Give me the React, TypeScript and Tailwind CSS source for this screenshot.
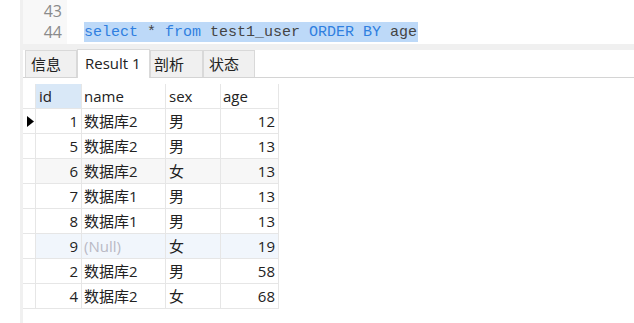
import React from "react";

type Row = { id: number; name: string | null; sex: string; age: number; bg?: string };

const rows: Row[] = [
  { id: 1, name: "数据库2", sex: "男", age: 12 },
  { id: 5, name: "数据库2", sex: "男", age: 13 },
  { id: 6, name: "数据库2", sex: "女", age: 13, bg: "bg-[#f7f7f7]" },
  { id: 7, name: "数据库1", sex: "男", age: 13 },
  { id: 8, name: "数据库1", sex: "男", age: 13 },
  { id: 9, name: null, sex: "女", age: 19, bg: "bg-[#f1f6fc]" },
  { id: 2, name: "数据库2", sex: "男", age: 58 },
  { id: 4, name: "数据库2", sex: "女", age: 68 },
];

const ui = { fontFamily: '"Open Sans", "Noto Sans CJK SC", sans-serif' };
const mono = { fontFamily: '"Liberation Mono", "DejaVu Sans Mono", monospace' };

const App: React.FC = () => {
  return (
    <div className="w-[634px] h-[323px] flex bg-white overflow-hidden text-[#222]" style={ui}>
      <div className="w-[20px] shrink-0 bg-white" />
      <div className="w-[3px] shrink-0 bg-[#f0f0f0]" />
      <div className="flex-1 flex flex-col">
        {/* editor */}
        <div className="h-[44px] flex">
          <div className="w-[44px] bg-[#f8f8f8] pt-[1px] pr-[5px] text-right text-[16px] leading-[21px] text-[#8a8a8a]">
            <div>43</div>
            <div>44</div>
          </div>
          <div className="flex-1 pl-[17px] pt-[1px] text-[15px] leading-[21px]" style={mono}>
            <div>&nbsp;</div>
            <div>
              <span className="bg-[#bdd9f8] inline-block h-[20px] leading-[21px] pr-[1px]">
                <span className="text-[#2f7fe0]">select</span>
                <span className="text-[#444]"> * </span>
                <span className="text-[#2f7fe0]">from</span>
                <span className="text-[#444]"> test1_user </span>
                <span className="text-[#2f7fe0]">ORDER BY</span>
                <span className="text-[#444]"> age</span>
              </span>
            </div>
          </div>
        </div>
        <div className="h-[6px] bg-[#f0f0f0]" />
        {/* tabs */}
        <div className="h-[28px] flex items-end pl-[2px] border-b border-[#d4d4d4] text-[15px]">
          <div className="w-[52px] h-[27px] bg-[#f0f0f0] border border-b-0 border-[#d9d9d9] pl-[5px] leading-[26px]">信息</div>
          <div className="w-[73px] h-[29px] -mb-[1px] bg-white border border-b-0 border-[#d9d9d9] pl-[7px] leading-[26px]">Result 1</div>
          <div className="w-[53px] h-[27px] bg-[#f0f0f0] border border-b-0 border-[#d9d9d9] pl-[3px] leading-[26px]">剖析</div>
          <div className="w-[52px] h-[27px] bg-[#f0f0f0] border border-b-0 border-[#d9d9d9] pl-[5px] leading-[26px]">状态</div>
        </div>
        {/* grid */}
        <div className="mt-[6px] text-[15px]">
          <div className="flex h-[25px] leading-[24px]">
            <div className="w-[13px] border-r border-b border-[#e6e6e6]" />
            <div className="w-[46px] bg-[#d9e8f7] border-r border-b border-[#e6e6e6] pl-[3px]">id</div>
            <div className="w-[84px] border-r border-b border-[#e6e6e6] pl-[2px]">name</div>
            <div className="w-[55px] border-r border-b border-[#e6e6e6] pl-[3px]">sex</div>
            <div className="w-[58px] border-r border-b border-[#e6e6e6] pl-[2px]">age</div>
          </div>
          {rows.map((r, i) => (
            <div key={r.id} className="flex h-[25px] leading-[24px]">
              <div className="w-[13px] border-r border-b border-[#e6e6e6] flex items-center pl-[4px]">
                {i === 0 && (
                  <svg width="7" height="11" viewBox="0 0 7 11">
                    <path d="M0 0 L7 5.5 L0 11 Z" fill="#000" />
                  </svg>
                )}
              </div>
              <div className={`w-[46px] border-r border-b border-[#e6e6e6] text-right pr-[3px] ${r.bg ?? ""}`}>{r.id}</div>
              <div className={`w-[84px] border-r border-b border-[#e6e6e6] pl-[2px] ${r.bg ?? ""}`}>
                {r.name ?? <span className="text-[#b9b9c4]">(Null)</span>}
              </div>
              <div className={`w-[55px] border-r border-b border-[#e6e6e6] pl-[3px] ${r.bg ?? ""}`}>{r.sex}</div>
              <div className={`w-[58px] border-r border-b border-[#e6e6e6] text-right pr-[3px] ${r.bg ?? ""}`}>{r.age}</div>
            </div>
          ))}
        </div>
      </div>
    </div>
  );
};

export default App;
